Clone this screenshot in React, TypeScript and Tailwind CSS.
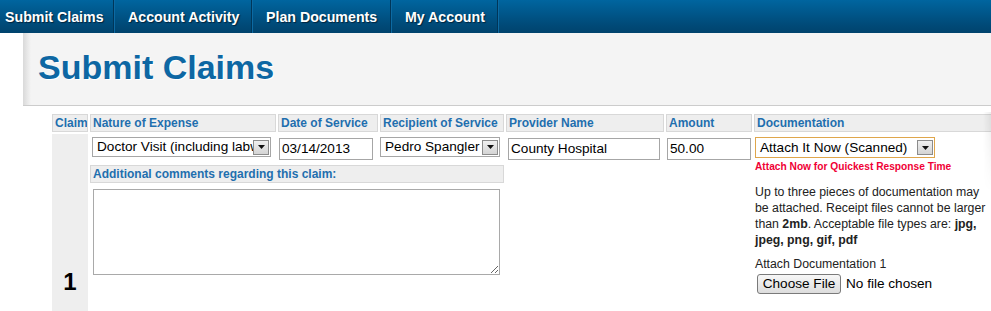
import React from "react";

function Arrow() {
  return (
    <div className="mr-[1px] flex h-[15px] w-[16px] shrink-0 items-center justify-center border border-[#8c8c8c] bg-[linear-gradient(#f0f0f0,#d4d4d4)]">
      <svg width="7" height="4" viewBox="0 0 7 4">
        <path d="M0 0H7L3.5 4Z" fill="#111" />
      </svg>
    </div>
  );
}

function FakeSelect({ text, className }: { text: string; className: string }) {
  return (
    <div className={"flex items-center border bg-white " + className}>
      <div className="min-w-0 flex-1 overflow-hidden whitespace-nowrap pl-[4px] text-[13.6px] leading-[16px] text-black">
        {text}
      </div>
      <Arrow />
    </div>
  );
}

function TextInput({ value, className }: { value: string; className: string }) {
  return (
    <div
      className={
        "flex h-[22px] items-center overflow-hidden whitespace-nowrap border border-[#a6a6a6] bg-white pl-[2px] text-[13.6px] leading-[16px] text-black " +
        className
      }
    >
      {value}
    </div>
  );
}

const hdr =
  "flex h-[18px] items-center border border-[#d8d8d8] bg-[#eeeeee] pl-[2px] text-[12px] font-bold leading-[16px] text-[#1f6fae] whitespace-nowrap overflow-hidden";

const navItems: { t: string; cls: string }[] = [
  { t: "Submit Claims", cls: "w-[114px] pl-[5px]" },
  { t: "Account Activity", cls: "w-[138px] pl-[14px]" },
  { t: "Plan Documents", cls: "w-[139px] pl-[14px]" },
  { t: "My Account", cls: "w-[107px] pl-[14px]" },
];

export default function App() {
  return (
    <div
      className="relative h-[311px] w-full overflow-hidden bg-white"
      style={{ fontFamily: '"Liberation Sans", Arial, sans-serif' }}
    >
      {/* Top navigation */}
      <nav className="flex h-[33px] bg-[linear-gradient(#00659f,#004a78_75%,#00436d)]">
        {navItems.map((n) => (
          <div
            key={n.t}
            className={
              "flex h-[33px] shrink-0 items-center whitespace-nowrap border-r border-[#003659] text-[14.2px] font-bold leading-[16px] text-white shadow-[1px_0_0_#0d6aa3] [text-shadow:1px_1px_1px_#00243d] " +
              n.cls
            }
          >
            {n.t}
          </div>
        ))}
      </nav>

      {/* Page header */}
      <div className="flex">
        <div className="w-[23px] shrink-0" />
        <div className="h-[73px] flex-1 border-b border-[#cccccc] bg-[linear-gradient(to_right,#d9d9d9,#f4f4f4_8px)] pl-[15px] pt-[17px]">
          <h1 className="text-[34px] font-bold leading-[34px] text-[#0d67a3] [text-shadow:1px_1px_0_#ffffff]">
            Submit Claims
          </h1>
        </div>
      </div>

      {/* Claims table */}
      <div className="mt-[8px] grid grid-cols-[36px_186px_100px_124px_158px_86px_240px] grid-rows-[18px_29px_18px_140px] gap-x-[2px] gap-y-[2px] pl-[52px]">
        <div className={hdr}>Claim</div>
        <div className={hdr}>Nature of Expense</div>
        <div className={hdr}>Date of Service</div>
        <div className={hdr}>Recipient of Service</div>
        <div className={hdr}>Provider Name</div>
        <div className={hdr}>Amount</div>
        <div className={hdr}>Documentation</div>

        {/* Claim number cell */}
        <div className="row-span-3 bg-[#eeeeee] pt-[136px] text-center text-[24px] font-bold leading-[24px] text-black">
          1
        </div>

        <div className="pl-[2px] pt-[3px]">
          <FakeSelect text="Doctor Visit (including labwork)" className="h-[20px] w-[179px] border-[#a6a6a6]" />
        </div>
        <div className="pl-[1px] pt-[4px]">
          <TextInput value="03/14/2013" className="w-[94px]" />
        </div>
        <div className="pt-[3px]">
          <FakeSelect text="Pedro Spangler" className="h-[20px] w-[120px] border-[#a6a6a6]" />
        </div>
        <div className="pl-[2px] pt-[4px]">
          <TextInput value="County Hospital" className="w-[152px]" />
        </div>
        <div className="pl-[1px] pt-[4px]">
          <TextInput value="50.00" className="w-[84px]" />
        </div>

        {/* Documentation cell */}
        <div className="row-span-3 pl-[1px] pt-[3px] text-[#222222]">
          <FakeSelect text="Attach It Now (Scanned)" className="h-[21px] w-[180px] border-[#dfa64c]" />
          <div className="mt-[3px] text-[10.2px] font-bold leading-[12px] text-[#f00035]">
            Attach Now for Quickest Response Time
          </div>
          <p className="mt-[11px] w-[233px] text-[12.3px] leading-[16px]">
            Up to three pieces of documentation may be attached. Receipt files cannot be larger than{" "}
            <b>2mb</b>. Acceptable file types are: <b>jpg, jpeg, png, gif, pdf</b>
          </p>
          <div className="mt-[8px] text-[12.3px] leading-[16px]">Attach Documentation 1</div>
          <div className="ml-[2px] mt-[2px] flex items-center gap-[5px]">
            <div className="flex h-[20px] w-[84px] items-center justify-center rounded-[3px] border border-[#7a7a7a] bg-[linear-gradient(#f7f7f7,#dddddd)] text-[13.6px] leading-[16px] text-black">
              Choose File
            </div>
            <span className="text-[13.6px] leading-[16px] text-black">No file chosen</span>
          </div>
        </div>

        <div className={hdr + " col-span-3"}>Additional comments regarding this claim:</div>
        <div className="col-span-2" />

        <div className="col-span-3 pl-[3px] pt-[4px]">
          <textarea className="block h-[86px] w-[407px] resize border border-[#a9a9a9] bg-white outline-none" />
        </div>
        <div className="col-span-2" />
      </div>

      {/* right edge shading */}
      <div className="pointer-events-none absolute right-0 top-[112px] h-[80px] w-[8px] bg-[linear-gradient(to_right,rgba(0,0,0,0),rgba(0,0,0,0.07))] [mask-image:linear-gradient(#000,transparent)]" />
    </div>
  );
}
